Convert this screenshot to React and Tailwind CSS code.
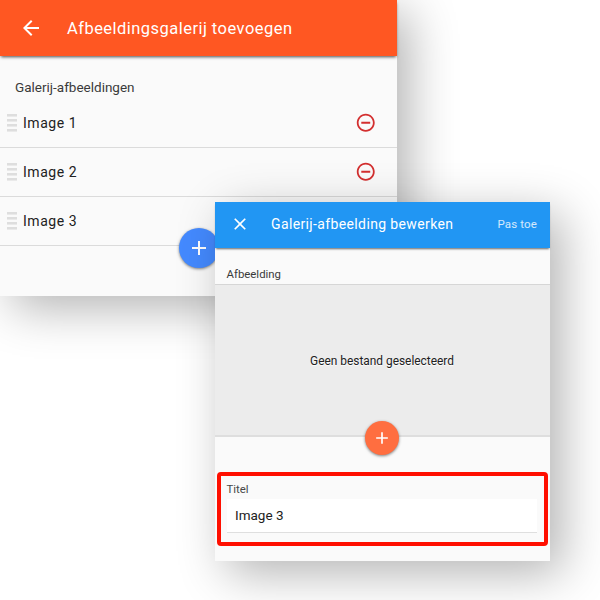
const PATHS = {
  back: "M20 11H7.83l5.59-5.59L12 4l-8 8 8 8 1.41-1.41L7.83 13H20v-2z",
  close: "M19 6.41 17.59 5 12 10.59 6.41 5 5 6.41 10.59 12 5 17.59 6.41 19 12 13.41 17.59 19 19 17.59 13.41 12z",
  plus: "M19 13h-6v6h-2v-6H5v-2h6V5h2v6h6v2z",
  remove: "M7 11v2h10v-2H7zm5-9C6.48 2 2 6.48 2 12s4.48 10 10 10 10-4.48 10-10S17.52 2 12 2zm0 18c-4.41 0-8-3.59-8-8s3.59-8 8-8 8 3.59 8 8-3.59 8-8 8z",
};

function Icon({ name, className }) {
  return (
    <svg viewBox="0 0 24 24" fill="currentColor" className={className}>
      <path d={PATHS[name]} />
    </svg>
  );
}

function Handle() {
  return (
    <div className="flex h-[18px] w-[10px] flex-col justify-between">
      {[0, 1, 2, 3].map((i) => (
        <span key={i} className="h-[3px] border-b border-[#eaeaea] bg-[#dedede]" />
      ))}
    </div>
  );
}

function Row({ label, removable }) {
  return (
    <li className="flex h-[49px] items-center border-b border-[#dbdbdb] pr-[20px] pl-[7px]">
      <Handle />
      <span className="ml-[6px] flex-1 text-[14px] tracking-[0.55px] text-[#212121]">{label}</span>
      {removable && <Icon name="remove" className="mr-[0.5px] mb-[0.5px] size-[21.5px] text-[#d32f2f]" />}
    </li>
  );
}

function GalleryWindow() {
  return (
    <section className="absolute top-0 left-0 h-[296px] w-[397px] bg-[#fafafa] shadow-[12px_12px_45px_rgba(0,0,0,0.3)]">
      <header className="relative flex h-[56px] items-center bg-[#ff5722] pl-[19px] text-white shadow-[0_2px_3px_-1px_rgba(0,0,0,0.7)]">
        <Icon name="back" className="size-6" />
        <h1 className="ml-[24px] pt-[2px] text-[16.5px] tracking-[0.46px]">Afbeeldingsgalerij toevoegen</h1>
      </header>
      <h2 className="mt-[21px] ml-[15px] h-[22px] text-[13.5px] leading-[20px] text-[#3a3a3a]">Galerij-afbeeldingen</h2>
      <ul>
        <Row label="Image 1" removable />
        <Row label="Image 2" removable />
        <Row label="Image 3" />
      </ul>
      <button className="absolute top-[228px] left-[179px] flex size-10 items-center justify-center rounded-full bg-[#448aff] pr-px text-white shadow-[0_1px_3px_rgba(0,0,0,0.5)]">
        <Icon name="plus" className="size-6" />
      </button>
    </section>
  );
}

function EditWindow() {
  return (
    <section className="absolute top-[202px] left-[215px] flex h-[359px] w-[335px] flex-col bg-[#fafafa] shadow-[12px_12px_45px_rgba(0,0,0,0.3)]">
      <header className="relative flex h-[46px] shrink-0 items-center bg-[#2196f3] pr-[13px] pb-px pl-[15px] text-white shadow-[0_2px_2px_-1px_rgba(0,0,0,0.6)]">
        <Icon name="close" className="mb-px size-5" />
        <h1 className="ml-[21px] flex-1 text-[14px] tracking-[0.37px]">Galerij-afbeelding bewerken</h1>
        <button className="pt-px text-[11.5px] tracking-[0.15px] text-white/80">Pas toe</button>
      </header>
      <h2 className="mt-[17px] ml-[11.5px] h-[19px] shrink-0 text-[11.4px] leading-[19px] text-[#3a3a3a]">Afbeelding</h2>
      <div className="relative flex h-[153px] shrink-0 items-center justify-center border-t border-b-2 border-t-[#d6d6d6] border-b-[#dedede] bg-[#ececec]">
        <p className="pt-[4px] pr-px text-[11.9px] text-[#212121] [text-shadow:0_1px_1px_white]">Geen bestand geselecteerd</p>
        <button className="absolute top-[136px] left-[150px] flex size-[34px] items-center justify-center rounded-full bg-[#ff6e40] text-white shadow-[0_1px_3px_rgba(0,0,0,0.5)]">
          <Icon name="plus" className="size-5" />
        </button>
      </div>
      <div className="mt-[35px] mr-[2px] ml-[2px] h-[74px] rounded-[4px] border-4 border-[#ff0f00] pt-[5px] pr-[7px] pl-[5.5px]">
        <label className="block h-[18px] text-[11.4px] leading-[17px] text-[#484848]">Titel</label>
        <div className="flex h-[34px] items-center border-b border-[#dfdfdf] bg-white pl-[8.5px] text-[13.5px] text-[#212121]">Image 3</div>
      </div>
    </section>
  );
}

export default function App() {
  return (
    <main className="relative h-[600px] w-[600px] overflow-hidden bg-white font-[Roboto,sans-serif]">
      <GalleryWindow />
      <EditWindow />
    </main>
  );
}
